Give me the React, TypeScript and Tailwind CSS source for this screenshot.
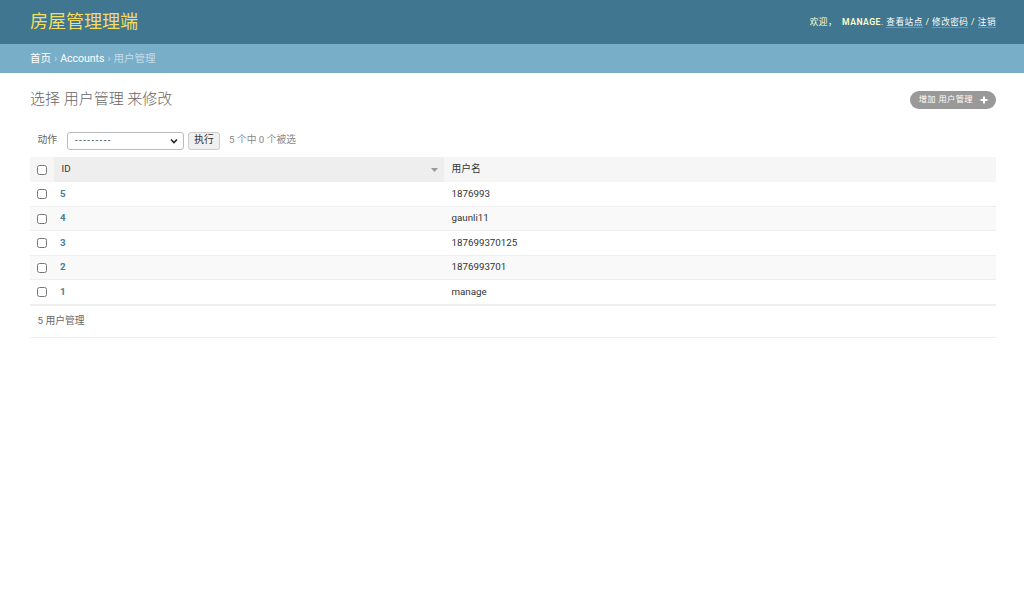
const rows = [
  { id: 5, name: "1876993" },
  { id: 4, name: "gaunli11" },
  { id: 3, name: "187699370125" },
  { id: 2, name: "1876993701" },
  { id: 1, name: "manage" },
];

const font = "font-['Roboto','Noto_Sans_CJK_SC',sans-serif]";

const Checkbox = () => (
  <input type="checkbox" className="m-0 h-[10px] w-[10px] align-middle" />
);

const Header = () => (
  <header className="flex h-[44px] items-center justify-between bg-[#417690] pl-[30px] pr-[28px]">
    <h1 className="m-0 text-[18px] font-normal leading-none text-[#f5dd5d]">房屋管理理端</h1>
    <div className="text-[8.6px] uppercase tracking-[0.5px] text-[#ffffcc]">
      欢迎，
      <strong className="ml-[5px] font-semibold">manage</strong>.{" "}
      <a className="border-b border-white/25 text-white">查看站点</a> /{" "}
      <a className="border-b border-white/25 text-white">修改密码</a> /{" "}
      <a className="border-b border-white/25 text-white">注销</a>
    </div>
  </header>
);

const Breadcrumbs = () => (
  <div className="flex h-[29px] items-center bg-[#79aec8] px-[30px] text-[10.5px] text-[#c4dce8]">
    <a className="text-white">首页</a>
    <span className="mx-[3px]">›</span>
    <a className="text-white">Accounts</a>
    <span className="mx-[3px]">›</span>
    <span>用户管理</span>
  </div>
);

const App = () => {
  return (
    <div className={`min-h-[601px] bg-white text-[#333] ${font}`}>
      <Header />
      <Breadcrumbs />
      <div className="pl-[30px] pr-[28px] pt-[16px]">
        <div className="flex h-[20px] items-center justify-between">
          <h1 className="m-0 text-[15px] font-light leading-[20px] text-[#666]">选择 用户管理 来修改</h1>
          <a className="mt-[1px] flex h-[18px] items-center gap-[7px] rounded-full bg-[#999] pl-[9px] pr-[8px] text-[8.25px] tracking-[0.4px] text-white">
            增加 用户管理
            <svg width="8" height="8" viewBox="0 0 8 8">
              <path d="M4 0.5v7M0.5 4h7" stroke="#fff" strokeWidth="2" />
            </svg>
          </a>
        </div>

        <div className="mt-[15px] flex h-[33px] items-center px-[7.5px] text-[9.75px] text-[#666]">
          <span>动作</span>
          <div className="ml-[10px] flex h-[18px] w-[117px] items-center justify-between rounded-[3px] border border-[#bbb] bg-white pl-[7px] pr-[5px] text-[#333]">
            <span className="tracking-[1.4px]">---------</span>
            <svg width="8" height="6" viewBox="0 0 8 6">
              <path d="M1 1.5l3 3 3-3" stroke="#222" strokeWidth="1.6" fill="none" />
            </svg>
          </div>
          <div className="ml-[4px] flex h-[18px] w-[32px] items-center justify-center rounded-[3px] border border-[#ccc] bg-[#f0f0f0] text-[#333]">
            执行
          </div>
          <span className="ml-[9px] text-[#888]">5 个中 0 个被选</span>
        </div>

        <div className="text-[9.75px]">
          <div className="grid h-[25px] grid-cols-[24px_390px_1fr] bg-[#f6f6f6]">
            <div className="flex items-center pl-[7px]">
              <Checkbox />
            </div>
            <div className="flex items-center justify-between bg-[#eee] pl-[7.5px] pr-[6px] text-[#333]">
              <span>ID</span>
              <svg width="7" height="4" viewBox="0 0 7 4">
                <path d="M0 0h7L3.5 4z" fill="#999" />
              </svg>
            </div>
            <div className="flex items-center pl-[7.5px] text-[#333]">用户名</div>
          </div>
          {rows.map((r, i) => (
            <div
              key={r.id}
              className={`grid h-[24.5px] grid-cols-[24px_390px_1fr] items-center border-b border-[#eee] pt-[1px] ${
                i % 2 === 1 ? "bg-[#f9f9f9]" : "bg-white"
              }`}
            >
              <div className="flex items-center pl-[7px]">
                <Checkbox />
              </div>
              <div className="pl-[6px] font-bold text-[#447e9b]">{r.id}</div>
              <div className="pl-[7.5px]">{r.name}</div>
            </div>
          ))}
          <div className="border-y border-[#eee] px-[7.5px] py-[7.5px] leading-[16.5px] text-[#666]">
            5 用户管理
          </div>
        </div>
      </div>
    </div>
  );
};

export default App;
